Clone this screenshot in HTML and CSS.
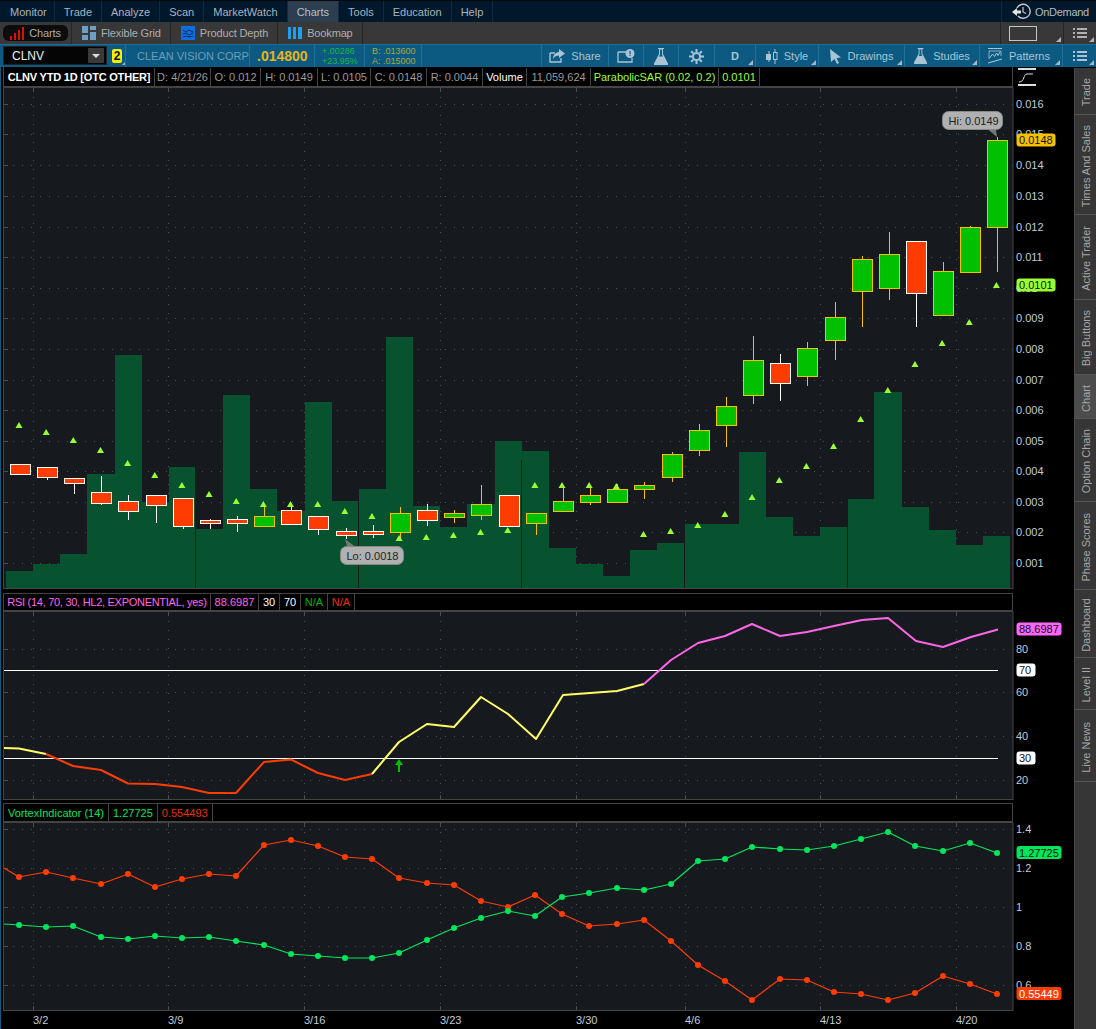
FILE: index.html
```html
<!DOCTYPE html>
<html lang="en">
<head>
<meta charset="UTF-8">
<meta name="viewport" content="width=device-width, initial-scale=1.0">
<title>CLNV Chart</title>
<link rel="stylesheet" href="styles.css">
</head>
<body>

<nav class="menu-bar">
  <a class="menu-item">Monitor</a>
  <a class="menu-item">Trade</a>
  <a class="menu-item">Analyze</a>
  <a class="menu-item">Scan</a>
  <a class="menu-item">MarketWatch</a>
  <a class="menu-item active">Charts</a>
  <a class="menu-item">Tools</a>
  <a class="menu-item">Education</a>
  <a class="menu-item">Help</a>
  <a class="ondemand">
    <svg width="20" height="17" viewBox="0 0 20 17">
      <path d="M5 5a7 7 0 1 1 1 8" fill="none" stroke="#c8c8c8" stroke-width="1.400"/>
      <path d="M11 4v5l3 1.500" fill="none" stroke="#c8c8c8" stroke-width="1.200"/>
      <path d="M0 9l5-4v2.500h4v3H5V13z" fill="#e4e4e4"/>
    </svg>
    OnDemand
  </a>
</nav>

<div class="sub-bar">
  <a class="sub-item pill">
    <svg width="14" height="13" viewBox="0 0 14 13"><path d="M0 13V9h2v4zM4 13V6h2v7zM8 13V3h2v10zM12 13V0h2v13z" fill="#d81010"/></svg>
    Charts
  </a>
  <a class="sub-item">
    <svg width="14" height="14" viewBox="0 0 14 14"><path d="M0 0h6v7H0zM8 0h6v4H8zM0 9h6v5H0zM8 6h6v8H8z" fill="#6f9fc4"/></svg>
    Flexible Grid
  </a>
  <a class="sub-item">
    <svg width="14" height="14" viewBox="0 0 14 14"><rect width="14" height="14" fill="#0f6fe0"/><path d="M2 4l3 2 3-2 4 2M2 8l3-1 3 2 4-2M2 11l3-1 3 1 4-1" fill="none" stroke="#0b2a5c" stroke-width="1"/></svg>
    Product Depth
  </a>
  <a class="sub-item">
    <svg width="14" height="14" viewBox="0 0 14 14"><path d="M0 1h3v12H0zM5 1h3v12H5zM10 1h4v12h-4z" fill="#1ea0f0"/></svg>
    Bookmap
  </a>
  <div class="sub-right">
    <div class="sub-cell grip cell-rect"><span class="outline-box"></span></div>
    <div class="sub-cell grip cell-list">
      <svg width="14" height="12" viewBox="0 0 14 12"><path d="M0 1h2v2H0zM4 1h10v2H4zM0 5h2v2H0zM4 5h10v2H4zM0 9h2v2H0zM4 9h10v2H4z" fill="#b0b0b0"/></svg>
    </div>
  </div>
</div>

<div class="tool-bar">
  <div class="symbol-box">
    <span class="symbol-name">CLNV</span>
    <span class="symbol-drop"></span>
  </div>
  <span class="link-badge grip">2</span>
  <div class="quote-cell company">CLEAN VISION CORP</div>
  <div class="quote-cell last-price">.014800</div>
  <div class="quote-cell change"><span>+.00286</span><span>+23.95%</span></div>
  <div class="quote-cell bid-ask"><span>B: .013600</span><span>A: .015000</span></div>

  <div class="tool-buttons">
    <a class="tool-btn w-share">
      <svg width="16" height="14" viewBox="0 0 16 14"><path d="M1 4h5M1 4v9h11V9" fill="none" stroke="#a9c4d4" stroke-width="1.400"/><path d="M10 0l6 4.500-6 4.500V6.500C7 6.500 5 8 4 10c0-4 2.500-6.500 6-7z" fill="#a9c4d4"/></svg>
      Share
    </a>
    <a class="tool-btn w-icon">
      <svg width="18" height="14" viewBox="0 0 18 14"><path d="M1 3h8M1 3v10h14V9" fill="none" stroke="#a9c4d4" stroke-width="1.300"/><circle cx="13" cy="4.500" r="4.500" fill="#a9c4d4"/><path d="M12.400 2h1.200v3h-1.200zM12.400 5.800h1.200v1.200h-1.200z" fill="#0d5c85"/></svg>
    </a>
    <a class="tool-btn w-icon">
      <svg width="14" height="17" viewBox="0 0 14 17"><path d="M4 0h6v1H9v5l5 9.500V17H0v-1.500L5 6V1H4z" fill="#a9c4d4"/><path d="M6 1.500h2V6.500l1 2H5l1-2z" fill="#0d5c85"/></svg>
    </a>
    <a class="tool-btn w-gear">
      <svg width="15" height="15" viewBox="0 0 15 15"><circle cx="7.500" cy="7.500" r="3.600" fill="none" stroke="#a9c4d4" stroke-width="2"/><path d="M7.500 0v3M7.500 12v3M0 7.500h3M12 7.500h3M2.200 2.200l2 2M10.800 10.800l2 2M2.200 12.800l2-2M10.800 4.200l2-2" stroke="#a9c4d4" stroke-width="2"/></svg>
    </a>
    <a class="tool-btn w-period grip bold">D</a>
    <a class="tool-btn w-style grip">
      <svg width="12" height="15" viewBox="0 0 12 15"><path d="M3 2v11M9 0v15" stroke="#a9c4d4"/><rect y="5" width="5" height="6" fill="#a9c4d4"/><rect x="7.500" y="3.500" width="3.500" height="7" fill="#0d5c85" stroke="#a9c4d4"/></svg>
      Style
    </a>
    <a class="tool-btn w-draw grip">
      <svg width="12" height="15" viewBox="0 0 12 15"><path d="M0 0l11 8.500-4.500.5 2.500 5-2 1-2.500-5L1 13z" fill="#a9c4d4"/></svg>
      Drawings
    </a>
    <a class="tool-btn w-studies grip">
      <svg width="13" height="16" viewBox="0 0 14 17"><path d="M4 0h6v1H9v5l5 9.500V17H0v-1.500L5 6V1H4z" fill="#a9c4d4"/><path d="M6 1.500h2V6.500l1 2H5l1-2z" fill="#0d5c85"/></svg>
      Studies
    </a>
    <a class="tool-btn w-patterns grip">
      <svg width="15" height="16" viewBox="0 0 15 16"><path d="M0 .5h14" stroke="#a9c4d4"/><path d="M1 3h12v5M1 3v8" fill="none" stroke="#a9c4d4" stroke-width=".8"/><path d="M1.500 10l3-4 2 2.500 2-3.500 1.500 2.500L12 4" fill="none" stroke="#a9c4d4"/><path d="M0 15l14-4" stroke="#a9c4d4" stroke-width="1.200"/></svg>
      Patterns
    </a>
    <a class="tool-btn w-list grip">
      <svg width="14" height="12" viewBox="0 0 14 12"><path d="M0 1h2v2H0zM4 1h10v2H4zM0 5h2v2H0zM4 5h10v2H4zM0 9h2v2H0zM4 9h10v2H4z" fill="#a9c4d4"/></svg>
    </a>
  </div>
</div>

<div class="workspace">
  <main class="chart-column">

    <section class="panel">
      <div class="study-row">
        <div class="study-header">
          <span class="cell title">CLNV YTD 1D [OTC OTHER]</span>
          <span class="cell dim c-d">D: 4/21/26</span>
          <span class="cell dim c-o">O: 0.012</span>
          <span class="cell dim c-h">H: 0.0149</span>
          <span class="cell dim c-l">L: 0.0105</span>
          <span class="cell dim c-d">C: 0.0148</span>
          <span class="cell dim c-d">R: 0.0044</span>
          <span class="cell white c-vol">Volume</span>
          <span class="cell dim c-num">11,059,624</span>
          <span class="cell lime c-sar">ParabolicSAR (0.02, 0.2)</span>
          <span class="cell lime c-val">0.0101</span>
        </div>
        <svg class="scale-icon" width="18" height="18" viewBox="0 0 18 18">
          <path d="M0 1h18M0 17h18" stroke="#ddd" stroke-width="2"/>
          <path d="M1 14c6 0 4-8 8-8h6" fill="none" stroke="#ddd"/>
        </svg>
      </div>
      <svg id="pricePlot" class="plot" width="1072" height="502" viewBox="3 87 1072 502"></svg>
    </section>

    <section class="panel rsi-panel">
      <div class="study-row">
        <div class="study-header short">
          <span class="cell pink c-rsi">RSI (14, 70, 30, HL2, EXPONENTIAL, yes)</span>
          <span class="cell pink c-rsival">88.6987</span>
          <span class="cell white c-level">30</span>
          <span class="cell white c-level">70</span>
          <span class="cell green c-na">N/A</span>
          <span class="cell red c-na">N/A</span>
        </div>
      </div>
      <svg id="rsiPlot" class="plot" width="1072" height="189" viewBox="3 611 1072 189"></svg>
    </section>

    <section class="panel vortex-panel">
      <div class="study-row">
        <div class="study-header vortex">
          <span class="cell mint">VortexIndicator (14)</span>
          <span class="cell mint">1.27725</span>
          <span class="cell red">0.554493</span>
        </div>
      </div>
      <svg id="vortexPlot" class="plot" width="1072" height="207" viewBox="3 822 1072 207"></svg>
    </section>

  </main>

  <aside class="side-tabs">
    <a class="side-tab t-trade"><span>Trade</span></a>
    <a class="side-tab t-sales"><span>Times And Sales</span></a>
    <a class="side-tab t-active"><span>Active Trader</span></a>
    <a class="side-tab t-big"><span>Big Buttons</span></a>
    <a class="side-tab t-chart current"><span>Chart</span></a>
    <a class="side-tab t-option"><span>Option Chain</span></a>
    <a class="side-tab t-phase"><span>Phase Scores</span></a>
    <a class="side-tab t-dash"><span>Dashboard</span></a>
    <a class="side-tab t-level"><span>Level II</span></a>
    <a class="side-tab t-news"><span>Live News</span></a>
  </aside>
</div>

<script src="chart.js"></script>
</body>
</html>
```

FILE: styles.css
```css
/* --- Basic Setup --- */
html, body {
  margin: 0;
  height: 100%;
  overflow: hidden;
}

body {
  font-family: "Liberation Sans", Arial, sans-serif;
  font-size: 11px;
  color: #b4b4b4;
  background-color: #000;
  display: flex;
  flex-direction: column;
}

/* --- Top Menu --- */
.menu-bar {
  display: flex;
  height: 22px;
  flex: none;
  background-color: #00182c;
  border-top: 1px solid #0a0a0a;
  box-sizing: border-box;
}

.menu-item {
  display: flex;
  align-items: center;
  padding: 0 9px 0 9px;
  border-right: 1px solid #13293f;
  color: #a9b4bf;
  white-space: nowrap;
}

.menu-item:first-child { padding: 0 7px 0 10px; }

.menu-item.active {
  background-color: #2c3e50;
  color: #b4c0cc;
}

.ondemand {
  margin-left: auto;
  width: 95px;
  display: flex;
  align-items: center;
  gap: 3px;
  padding-left: 10px;
  box-sizing: border-box;
  border-left: 1px solid #13293f;
  color: #b4bcc4;
  letter-spacing: -0.3px;
  white-space: nowrap;
}

/* --- Second Row --- */
.sub-bar {
  display: flex;
  height: 22px;
  flex: none;
  background-color: #383838;
}

.sub-item {
  display: flex;
  align-items: center;
  gap: 5px;
  padding: 0 9px 0 10px;
  border-right: 1px solid #262626;
  color: #aeaeae;
  letter-spacing: -0.15px;
  white-space: nowrap;
}

.sub-item.pill {
  padding: 0 2px;
  width: 72px;
  box-sizing: border-box;
  justify-content: center;
  position: relative;
  z-index: 0;
}

.sub-item.pill::before {
  content: "";
  position: absolute;
  z-index: -1;
  left: 3px;
  right: 3px;
  top: 3px;
  bottom: 3px;
  background-color: #0c0c0c;
  border-radius: 6px;
}

.sub-right {
  margin-left: auto;
  display: flex;
}

.sub-cell {
  display: flex;
  align-items: center;
  justify-content: center;
  border-left: 1px solid #262626;
  box-sizing: border-box;
}

.cell-rect {
  width: 63px;
  justify-content: flex-start;
  padding-left: 8px;
}

.cell-list { width: 33px; }

.outline-box {
  width: 26px;
  height: 13px;
  border: 1px solid #c4c4c4;
}

/* small corner marker on buttons with a menu */
.grip { position: relative; }

.grip::after {
  content: "";
  position: absolute;
  right: 2px;
  bottom: 2px;
  border-style: solid;
  border-width: 0 0 5px 5px;
  border-color: transparent transparent #a9b4bf transparent;
}

/* --- Symbol Toolbar --- */
.tool-bar {
  display: flex;
  height: 23px;
  flex: none;
  align-items: stretch;
  background-color: #0c5a82;
  border-top: 1px solid #1a6d98;
  box-sizing: border-box;
}

.symbol-box {
  display: flex;
  align-items: center;
  justify-content: space-between;
  width: 104px;
  margin: 1px 0 2px 3px;
  padding: 0 2px 0 8px;
  box-sizing: border-box;
  background-color: #050505;
  border: 1px solid #222;
}

.symbol-name {
  color: #eee;
  font-size: 12px;
}

.symbol-drop {
  width: 16px;
  height: 15px;
  background-color: #3a3a3a;
  display: flex;
  align-items: center;
  justify-content: center;
}

.symbol-drop::before {
  content: "";
  border-style: solid;
  border-width: 4px 4px 0 4px;
  border-color: #ddd transparent transparent transparent;
}

.link-badge {
  align-self: center;
  width: 10px;
  height: 14px;
  margin: 0 3px 0 5px;
  background-color: #f5f000;
  color: #111;
  font-weight: bold;
  font-size: 12px;
  line-height: 14px;
  text-align: center;
  border-radius: 2px;
}

.link-badge.grip::after {
  right: -3px;
  bottom: -2px;
  border-width: 0 0 3px 3px;
}

.quote-cell {
  display: flex;
  flex-direction: column;
  justify-content: center;
  border-left: 1px solid #1d7097;
  padding: 0 7px;
  white-space: nowrap;
}

.company {
  padding-left: 11px;
  width: 124px;
  box-sizing: border-box;
  color: #6f9db6;
}

.last-price {
  width: 65px;
  box-sizing: border-box;
  color: #e8b418;
  font-size: 14px;
  font-weight: bold;
}

.change {
  width: 50px;
  box-sizing: border-box;
  color: #14b93c;
  font-size: 9px;
  line-height: 10px;
}

.bid-ask {
  width: 58px;
  box-sizing: border-box;
  color: #a8a838;
  font-size: 9px;
  line-height: 10px;
  border-right: 1px solid #1d7097;
}

.tool-buttons {
  margin-left: auto;
  display: flex;
}

.tool-btn {
  display: flex;
  align-items: center;
  justify-content: center;
  gap: 6px;
  box-sizing: border-box;
  border-left: 1px solid #1d7097;
  color: #a9c4d4;
  white-space: nowrap;
}

.tool-btn.bold { font-weight: bold; }

.w-share { width: 67px; }
.w-icon { width: 35px; }
.w-gear { width: 36px; }
.w-period { width: 41px; }
.w-style { width: 63px; }
.w-draw { width: 86px; }
.w-studies { width: 75px; }
.w-patterns {
  width: 83px;
  padding-right: 4px;
}
.w-list { width: 34px; }

/* --- Chart Area --- */
.workspace {
  flex: 1;
  display: flex;
  min-height: 0;
}

.chart-column {
  width: 1074px;
  flex: none;
  box-sizing: border-box;
  border-left: 1px solid #0c5a82;
  padding-left: 2px;
  display: flex;
  flex-direction: column;
}

.rsi-panel { margin-top: 4px; }
.vortex-panel { margin-top: 3px; }

.study-row {
  display: flex;
  align-items: center;
}

.study-header {
  width: 1010px;
  height: 20px;
  padding-top: 1px;
  box-sizing: border-box;
  display: flex;
  background-color: #000;
  border: 1px solid #444;
  border-top: 0;
  flex: none;
}

.study-header.short {
  height: 18px;
  padding-top: 0;
  border-top: 1px solid #444;
}

.study-header.vortex {
  height: 19px;
  padding-top: 0;
  border-top: 1px solid #444;
}

.cell {
  display: flex;
  align-items: center;
  justify-content: center;
  padding: 0 4px;
  box-sizing: border-box;
  border-right: 1px solid #444;
  white-space: nowrap;
}

.cell.title {
  color: #fff;
  font-weight: bold;
  width: 151px;
  padding: 0;
  letter-spacing: -0.2px;
}

.c-d { width: 56px; padding: 0; }
.c-o { width: 50px; padding: 0; }
.c-h { width: 57px; padding: 0; }
.c-l { width: 53px; padding: 0; }
.c-vol { width: 44px; padding: 0; }
.c-num { width: 64px; padding: 0; }
.c-sar { width: 128px; padding: 0; }
.c-val { width: 41px; padding: 0; }

.c-rsi { width: 207px; padding: 0; letter-spacing: -0.28px; }
.c-rsival { width: 48px; padding: 0; }
.c-level { width: 21px; padding: 0; }
.c-na { width: 27px; padding: 0; }

.cell.dim { color: #9a9a9a; }
.cell.white { color: #fff; }
.cell.lime { color: #99ff33; }
.cell.pink { color: #ff66ee; }
.cell.green { color: #00b300; }
.cell.mint { color: #00e65c; }
.cell.red { color: #e63200; }

.scale-icon {
  margin-left: 5px;
}

.plot {
  display: block;
  font-family: "Liberation Sans", Arial, sans-serif;
  font-size: 11px;
}

.axis-label { fill: #c0ccd8; }
.tag-label { fill: #111; }
.tag-label.light { fill: #fff; }
.callout-label { fill: #222; }

/* --- Right Side Tabs --- */
.side-tabs {
  flex: 1;
  margin-top: 1px;
  background-color: #363636;
  border-left: 1px solid #4a4a4a;
  display: flex;
  flex-direction: column;
}

.side-tab {
  display: flex;
  align-items: center;
  justify-content: center;
  padding-top: 3px;
  border-bottom: 1px solid #555;
  box-sizing: border-box;
  color: #a6a6a6;
}

.side-tab span {
  writing-mode: vertical-rl;
  transform: rotate(180deg);
  white-space: nowrap;
}

.side-tab.current {
  background-color: #4c4c4c;
}

.t-trade { height: 47px; }
.t-sales { height: 100px; }
.t-active { height: 85px; }
.t-big { height: 75px; }
.t-chart { height: 44px; }
.t-option { height: 83px; }
.t-phase { height: 88px; }
.t-dash { height: 68px; }
.t-level { height: 52px; }
.t-news { height: 72px; }
```

FILE: chart.js
```js
// all chart data is in page pixels, the svg viewBoxes line up with the page
const SVG_NS = 'http://www.w3.org/2000/svg';
const PLOT_BG = '#161a1f';
const BORDER = '#444';
const GRID = '#4a4e52';
const DOWN = '#ff3c00';
const UP = '#00c000';
const GOLD = '#f7c000';
const SAR = '#99ff33';

const weekTicks = [
  [33, '3/2'], [168, '3/9'], [304, '3/16'], [440, '3/23'],
  [576, '3/30'], [685, '4/6'], [820, '4/13'], [956, '4/20']
];

// body top, body bottom, wick top, wick bottom, up?
const candles = [
  [464, 474, 464, 474, 0], [467, 477, 467, 480, 0], [478, 483, 478, 494, 0],
  [492, 503, 476, 505, 0], [501, 511, 495, 520, 0], [495, 505, 495, 523, 0],
  [498, 526, 498, 529, 0], [520, 523, 519, 529, 0], [519, 523, 516, 532, 0],
  [516, 526, 507, 526, 1], [510, 524, 507, 524, 0], [516, 529, 516, 535, 0],
  [531, 535, 528, 539, 0], [531, 534, 525, 538, 0], [513, 532, 507, 540, 1],
  [510, 520, 504, 526, 0], [513, 517, 510, 523, 1], [504, 515, 485, 520, 1],
  [495, 526, 495, 526, 0], [513, 523, 513, 535, 1], [501, 511, 485, 511, 1],
  [495, 502, 488, 505, 1], [489, 502, 484, 502, 1], [485, 489, 482, 499, 1],
  [454, 477, 452, 482, 1], [430, 450, 424, 456, 1], [406, 425, 397, 447, 1],
  [360, 395, 336, 404, 1], [363, 383, 354, 401, 0], [348, 376, 342, 386, 1],
  [317, 340, 302, 360, 1], [259, 291, 256, 327, 1], [254, 288, 232, 300, 1],
  [241, 293, 241, 327, 0], [271, 315, 262, 315, 1], [227, 272, 226, 272, 1],
  [140, 227, 137, 272, 1]
];

const sarY = [
  425, 432, 440, 450, 463, 475, 485, 494, 501, 504, 504, 504, 511, 516, 538, 537,
  535, 532, 530, 485, 485, 485, 486, 534, 531, 525, 514, 497, 480, 466, 446, 419,
  390, 364, 343, 322, 285
];

const volumeTop = [
  571, 564, 554, 474, 355, 502, 467, 529, 395, 489, 511, 402, 501, 489, 337, 506,
  527, 504, 441, 451, 548, 564, 576, 550, 543, 524, 524, 452, 517, 536, 527, 499,
  392, 507, 530, 545, 536
];

const rsiRed = [[46, 754], [73, 766], [101, 770], [128, 783.5], [155, 784], [182, 787], [209, 793], [236, 793], [264, 762], [291, 759.5], [318, 773], [345, 780], [372, 774]];
const rsiYellowA = [[4, 748], [19, 748.5], [46, 754]];
const rsiYellowB = [[372, 774], [399, 742], [427, 724], [454, 727], [481, 697], [508, 714], [536, 739], [563, 695], [590, 693], [617, 691], [644, 684]];
const rsiPink = [[644, 684], [671, 660], [698, 643], [725, 636], [752, 624], [780, 636], [807, 632], [834, 626], [862, 620], [888, 618], [916, 641], [943, 647], [971, 637], [998, 629.5]];

const vortexX = [19, 46, 73, 101, 128, 155, 182, 209, 236, 264, 291, 318, 345, 372, 399, 427, 454, 481, 508, 535, 562, 589, 617, 644, 671, 698, 725, 752, 780, 807, 834, 861, 888, 915, 943, 970, 997];
const viPlus = [925, 927, 926, 937, 939, 936, 938, 937, 941, 945, 954, 956, 958, 958, 953, 940, 928, 918, 911, 916, 897, 893, 888, 890, 884, 861, 859, 847, 849, 850, 846, 839, 832, 846, 851, 843, 853];
const viMinus = [877, 872, 878, 884, 874, 887, 879, 874, 876, 845, 840, 846, 857, 859, 878, 883, 885, 901, 907, 895, 914, 926, 924, 920, 941, 965, 981, 1000, 979, 980, 992, 994, 1000, 993, 976, 984, 994];

function add(svg, name, attrs, text) {
  const el = document.createElementNS(SVG_NS, name);
  for (const key in attrs) el.setAttribute(key, attrs[key]);
  if (text !== undefined) el.textContent = text;
  svg.appendChild(el);
  return el;
}

function drawFrame(svg, top, bottom) {
  add(svg, 'rect', { x: 3.5, y: top, width: 1009.5, height: bottom - top, fill: PLOT_BG, stroke: BORDER });
}

function drawGrid(svg, top, bottom, rows) {
  rows.forEach(function (y) {
    add(svg, 'line', { x1: 4, x2: 1013, y1: y + 0.5, y2: y + 0.5, stroke: GRID, 'stroke-dasharray': '1 8' });
    add(svg, 'line', { x1: 4, x2: 8, y1: y + 0.5, y2: y + 0.5, stroke: GRID });
  });
  weekTicks.forEach(function (tick) {
    const x = tick[0] + 0.5;
    add(svg, 'line', { x1: x, x2: x, y1: top, y2: bottom, stroke: GRID, 'stroke-dasharray': '1 8' });
    add(svg, 'line', { x1: x, x2: x, y1: top, y2: top + 4, stroke: GRID });
    add(svg, 'line', { x1: x, x2: x, y1: bottom - 4, y2: bottom, stroke: GRID });
  });
}

function axisLabel(svg, y, text) {
  add(svg, 'text', { class: 'axis-label', x: 1016, y: y + 4 }, text);
}

function tag(svg, y, width, color, text, light) {
  add(svg, 'rect', { x: 1016.5, y: y - 6.5, width: width, height: 13, rx: 3, fill: color });
  add(svg, 'text', { class: light ? 'tag-label light' : 'tag-label', x: 1019, y: y + 4 }, text);
}

function callout(svg, x, y, w, tipX, tipY, baseX, text) {
  const base = tipY > y ? y + 18 : y;
  add(svg, 'polygon', { points: baseX + ',' + base + ' ' + (baseX + 8) + ',' + base + ' ' + tipX + ',' + tipY, fill: '#777' });
  add(svg, 'rect', { x: x, y: y, width: w, height: 18, rx: 6, fill: '#b0b0b0', stroke: '#888' });
  add(svg, 'text', { class: 'callout-label', x: x + 6, y: y + 13 }, text);
}

function line(svg, pts, color, width) {
  add(svg, 'polyline', {
    points: pts.map(function (p) { return p.join(','); }).join(' '),
    fill: 'none', stroke: color, 'stroke-width': width, 'stroke-linejoin': 'round'
  });
}

function drawPrice() {
  const svg = document.getElementById('pricePlot');
  const rows = [104, 134, 165, 196, 227, 257, 288, 318, 349, 380, 410, 441, 471, 502, 532, 563];
  const labels = ['0.016', '0.015', '0.014', '0.013', '0.012', '0.011', '0.01', '0.009', '0.008', '0.007', '0.006', '0.005', '0.004', '0.003', '0.002', '0.001'];

  drawFrame(svg, 87.5, 588.5);
  drawGrid(svg, 88, 588, rows);

  volumeTop.forEach(function (top, i) {
    const x0 = Math.round(6 + 27.14 * i);
    const x1 = Math.round(6 + 27.14 * (i + 1));
    add(svg, 'rect', { x: x0, y: top, width: x1 - x0, height: 588 - top, fill: '#07532f' });
  });
  [195, 358, 521, 684, 847].forEach(function (x) {
    add(svg, 'rect', { x: x, y: 460, width: 1, height: 128, fill: PLOT_BG });
  });

  candles.forEach(function (c, i) {
    const cx = Math.round(19.7 + 27.16 * i);
    const edge = c[4] ? GOLD : '#fff';
    add(svg, 'line', { x1: cx + 0.5, x2: cx + 0.5, y1: c[2], y2: c[3], stroke: edge });
    add(svg, 'rect', { x: cx - 9.5, y: c[0] + 0.5, width: 20, height: c[1] - c[0], fill: c[4] ? UP : DOWN, stroke: edge });
  });

  sarY.forEach(function (y, i) {
    const x = 19 + 27.15 * i;
    add(svg, 'polygon', { points: x + ',' + (y - 3) + ' ' + (x + 3.5) + ',' + (y + 3) + ' ' + (x - 3.5) + ',' + (y + 3), fill: SAR });
  });

  rows.forEach(function (y, i) { axisLabel(svg, y, labels[i]); });
  tag(svg, 140, 39, GOLD, '0.0148');
  tag(svg, 285, 39, SAR, '0.0101');

  callout(svg, 340.5, 546.5, 63, 345, 539, 347, 'Lo: 0.0018');
  callout(svg, 942.5, 111.5, 60, 997, 137, 988, 'Hi: 0.0149');
}

function drawRsi() {
  const svg = document.getElementById('rsiPlot');
  const rows = [649, 692, 736, 780];

  drawFrame(svg, 611.5, 799.5);
  drawGrid(svg, 612, 799, rows);

  [670, 758].forEach(function (y) {
    add(svg, 'line', { x1: 4, x2: 998, y1: y + 0.5, y2: y + 0.5, stroke: '#fff' });
  });

  line(svg, rsiYellowA, '#ffff66', 2);
  line(svg, rsiRed, DOWN, 2);
  line(svg, rsiYellowB, '#ffff66', 2);
  line(svg, rsiPink, '#ff66e6', 2);

  add(svg, 'path', { d: 'M399 759l4 6h-3v7h-2v-7h-3z', fill: '#00c000' });

  ['80', '60', '40', '20'].forEach(function (text, i) { axisLabel(svg, rows[i], text); });
  tag(svg, 670, 19, '#fff', '70');
  tag(svg, 758, 19, '#fff', '30');
  tag(svg, 629, 45, '#ff66ff', '88.6987');
}

function drawVortex() {
  const svg = document.getElementById('vortexPlot');
  const rows = [829, 868, 907, 946, 985];

  drawFrame(svg, 822.5, 1010.5);
  drawGrid(svg, 823, 1010, rows);

  [[viMinus, DOWN, 868], [viPlus, '#00e65c', 924]].forEach(function (series) {
    const pts = [[4, series[2]]].concat(series[0].map(function (y, i) { return [vortexX[i], y]; }));
    line(svg, pts, series[1], 1.2);
    pts.slice(1).forEach(function (p) {
      add(svg, 'circle', { cx: p[0], cy: p[1], r: 3, fill: series[1] });
    });
  });

  ['1.4', '1.2', '1', '0.8', '0.6'].forEach(function (text, i) { axisLabel(svg, rows[i], text); });
  tag(svg, 852.5, 45, '#00e65c', '1.27725');
  tag(svg, 993.5, 45, DOWN, '0.55449', true);

  weekTicks.forEach(function (tick) {
    add(svg, 'text', { class: 'axis-label', x: tick[0], y: 1024 }, tick[1]);
  });
}

drawPrice();
drawRsi();
drawVortex();
```
